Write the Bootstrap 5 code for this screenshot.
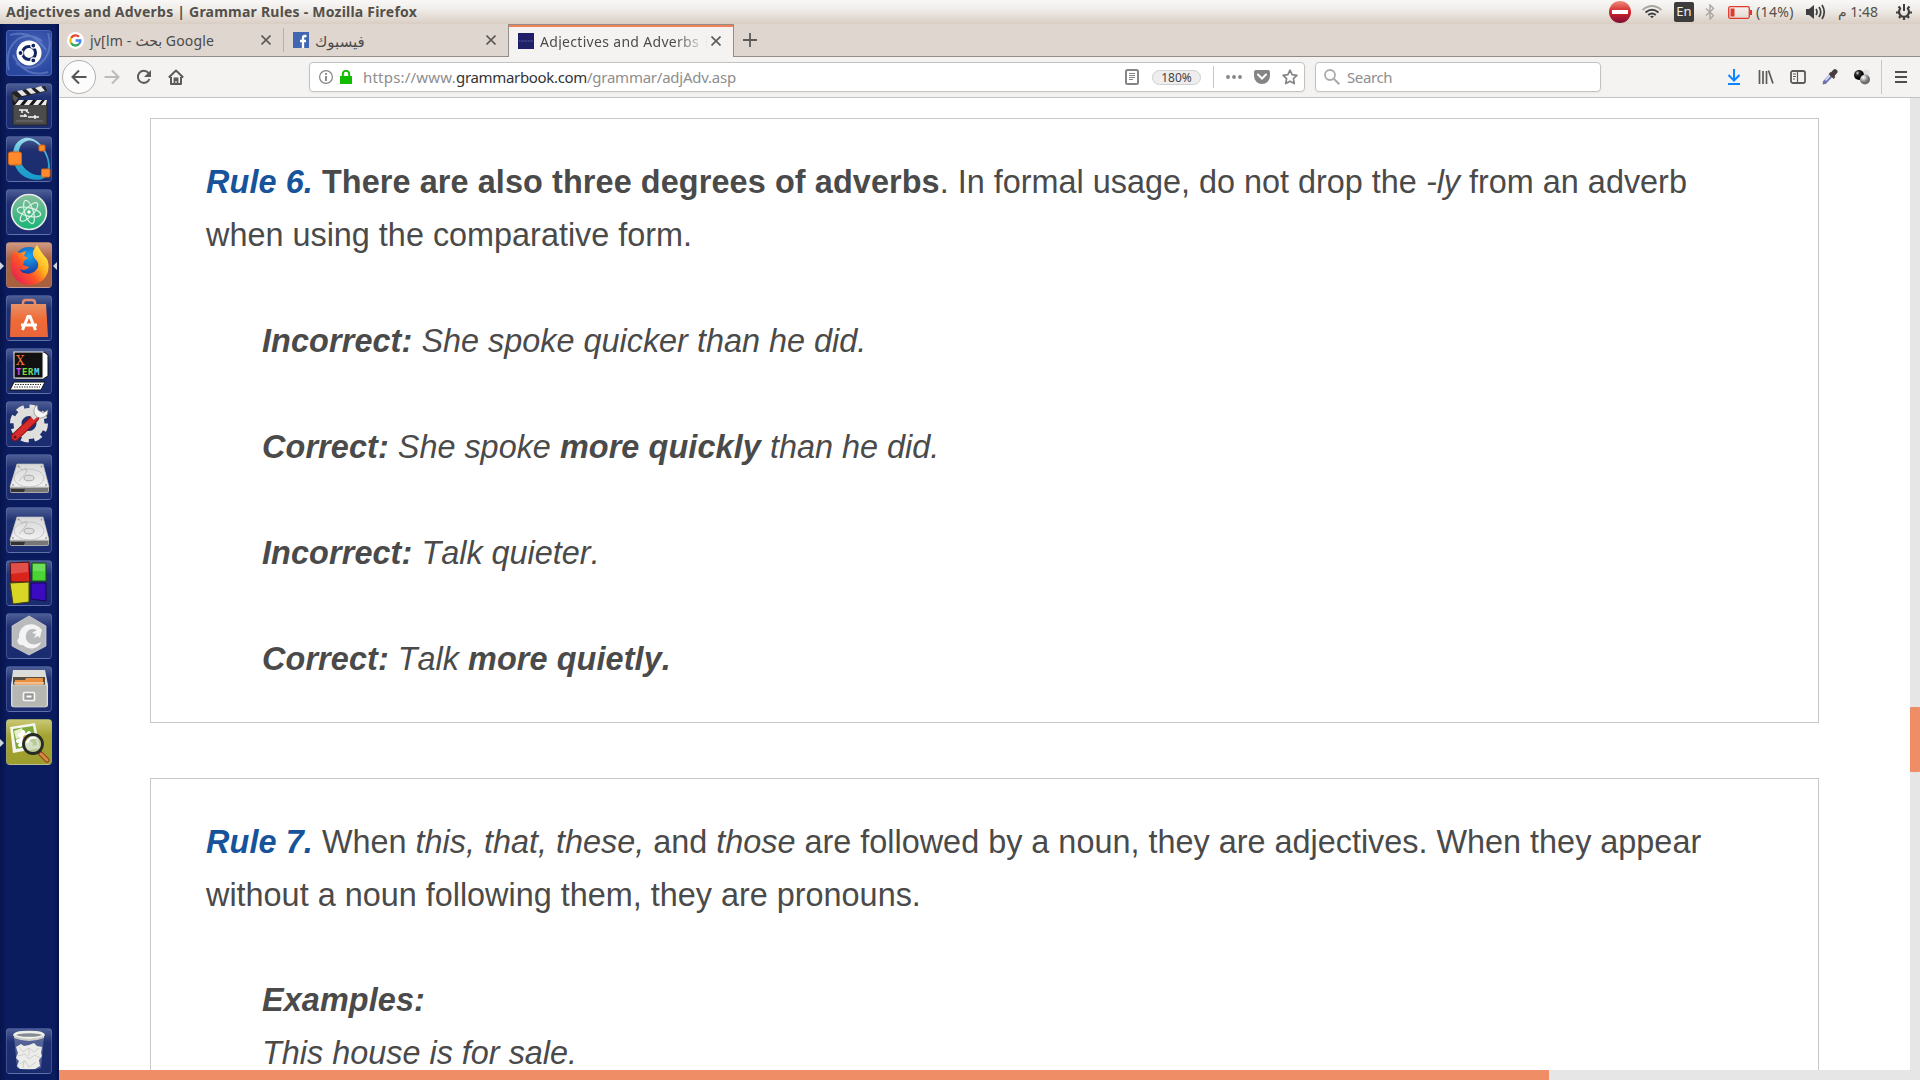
<!DOCTYPE html>
<html lang="en">
<head>
<meta charset="utf-8">
<title>Adjectives and Adverbs | Grammar Rules</title>
<link rel="stylesheet" href="https://cdn.jsdelivr.net/npm/bootstrap@5.3.0/dist/css/bootstrap.min.css">
<style>
body{width:1920px;height:1080px;overflow:hidden;background:#fff;font-family:"Noto Sans","DejaVu Sans",sans-serif;font-size:14px;line-height:1.2;color:#4c4c4c}
svg{display:block;flex:none}
.topbar{height:24px;background:linear-gradient(#f9f8f7,#f1eeeb 35%,#d9cec4);padding-left:6px;color:#54504a}
.win-title{font-weight:700;font-size:14px;white-space:nowrap;letter-spacing:.22px}
.tray{width:311px}
.tray>*{flex:none;white-space:nowrap}
.t-bat{letter-spacing:.35px;width:39px;margin-left:4px}
.t-clock{letter-spacing:.35px;width:43px;margin-left:12px}
.t-goog{letter-spacing:.2px;padding-top:2px}
.t-face{font-size:15px;padding-top:1px}
.t-adj{letter-spacing:.31px}
.t-u1{letter-spacing:.21px}
.t-u2{letter-spacing:-.33px;color:#333}
.t-u3{letter-spacing:-.24px}
.t-s{letter-spacing:-.4px}
.lang{width:20px;height:20px;background:#3c3c3c;color:#f2efec;border-radius:2px;font-size:13px}
.launcher{width:59px;background:linear-gradient(90deg,#06144d,#0b1c5e 12%,#0b1c5e 92%,#03104a);padding:6px 0 6px 6px}
.tile{width:46px;height:46px;border-radius:4px;border:1px solid rgba(150,170,225,.28);background:linear-gradient(rgba(170,185,225,.42),rgba(110,130,190,.2) 30%,rgba(90,110,180,.2));margin-bottom:7px}
.tile svg{margin:-1px}
.tile-dash{background:radial-gradient(circle at 60% 40%,#4a68bd,#2a479f 70%)}
.tile-fox{background:linear-gradient(#cf9a83,#ab6340 35%,#a75f3d)}
.tile-view{background:linear-gradient(#c9c873,#a5a432 35%,#9c9d2e)}
.tile-open::before,.tile-focus::after{content:"";position:absolute;top:19px;border:4px solid transparent}
.tile-open::before{left:-7px;border-left-color:#cfd3dc;border-right:0}
.tile-focus::after{right:-6px;border-right-color:#cfd3dc;border-left:0}
.tab-strip{height:33px;background:#dfd6d0;border-bottom:1px solid #948c86}
.page-tab{height:32px;color:#4a4a4a;white-space:nowrap}
.page-tab-on{height:33px;width:226px;background:#f4f3f1;border:1px solid #948c86;border-bottom:0;box-shadow:inset 0 2px #ef8058;padding-left:9px}
.fade-end{-webkit-mask-image:linear-gradient(90deg,#000 135px,transparent 168px);mask-image:linear-gradient(90deg,#000 135px,transparent 168px);width:168px;margin-left:6px;padding-top:2px}
.tab-x{margin-left:auto;margin-right:12px}
.tools{height:41px;background:#f4f3f1;border-bottom:1px solid #c3c2c0;color:#8e8e8e}
.tool{width:32px;height:32px}
.tool-back{width:34px;height:34px;border:1px solid #b3b0ad;border-radius:50%;background:#fcfcfc}
.field{height:30px;background:#fff;border:1px solid #c4c2c0;border-radius:4px;box-shadow:0 1px 3px rgba(0,0,0,.05);font-size:15px}
.zoom-pill{width:49px;height:15px;border:1px solid #cfcfcf;border-radius:8px;background:#eee;color:#444;font-size:12px;line-height:13px}
.vline{width:1px;background:#c9c8c6}
.reading{padding:20px 91px 0;height:972px;overflow:hidden}
.rule{border:1px solid #c8c8c8;padding:36.5px 54px 36.5px 55px;margin-bottom:55px;font:32.4px/53px "Liberation Sans",Arial,sans-serif;font-kerning:none;color:#4a4a4a;white-space:nowrap}
.rule p{margin:0}
.rule b{letter-spacing:.1px}
.rule .examples{padding:53px 0 0 56px}
.rule .examples p+p.spaced{margin-top:53px}
.rule+.rule{min-height:400px}
.rule+.rule .examples{padding-top:52px}
.rule-no{color:#17539b;font-weight:700;font-style:italic;letter-spacing:.1px}
.vscroll{width:10px;background:#e6e6e6}
.vthumb{height:65px;background:#ef8e66;margin-top:609px;border-radius:1px}
.hscroll{height:10px;background:#e6e6e6}
.hthumb{width:1490px;background:#ef8e66}
</style>
</head>
<body class="d-flex flex-column">
<header class="topbar d-flex align-items-center">
  <span class="win-title">Adjectives and Adverbs | Grammar Rules - Mozilla Firefox</span>
  <div class="tray d-flex align-items-center ms-auto">
    <svg width="22" height="22" viewBox="0 0 22 22"><defs><linearGradient id="rd" x2="0" y2="1"><stop stop-color="#ee8b78"/><stop offset=".5" stop-color="#d2222a"/><stop offset="1" stop-color="#7c1036"/></linearGradient></defs><circle cx="11" cy="11" r="11" fill="url(#rd)"/><rect x="3" y="9" width="16" height="4" fill="#fff"/></svg>
    <svg width="20" height="14" viewBox="0 0 20 14" fill="none" style="margin-left:11px"><path d="M.5 5Q10-3 19.500 5" stroke="#aaa59f" stroke-width="1.800"/><path d="M3.500 7.500Q10 2 16.500 7.500M6.200 10Q10 7 13.800 10" stroke="#3f3f3f" stroke-width="1.900"/><path d="m8 11.300 2 2 2-2q-2-1.300-4 0" fill="#3f3f3f"/></svg>
    <span class="lang d-flex align-items-center justify-content-center" style="margin-left:12px">En</span>
    <svg width="10" height="16" viewBox="0 0 10 16" fill="none" stroke="#aaa6a2" stroke-width="1.400" style="margin-left:11px"><path d="m1 4.500 7.500 7L5 15V1l3.500 3.500L1 11.500"/></svg>
    <svg width="24" height="13" viewBox="0 0 24 13" style="margin-left:13px"><rect x=".7" y=".7" width="20.600" height="11.600" rx="1.500" fill="none" stroke="#df382c" stroke-width="1.300"/><path d="M2.500 2.500h4v8h-4zM22 4h2v5h-2z" fill="#df382c"/></svg>
    <span class="t-bat">(14%)</span>
    <svg width="20" height="16" viewBox="0 0 20 16" style="margin-left:11px"><path d="M0 5h3l5-4v14l-5-4H0z" fill="#3f3f3f"/><path d="M10 5q2 3 0 6M13 3q3.500 5 0 10M16 1q4.500 7 0 14" fill="none" stroke="#3f3f3f" stroke-width="1.700"/></svg>
    <span class="t-clock"><bdi>م</bdi> 1:48</span>
    <svg width="16" height="16" viewBox="-8 -8 16 16" style="margin-left:15px"><g fill="none" stroke="#3f3f3f"><path d="M-3.200-4A5 5 0 1 0 3.200-4" stroke-width="2.200"/><path d="M0-8v7" stroke-width="2"/><path d="M-5.500-5.500l1.700 1.700M5.500-5.500 3.800-3.800M-8 .5h3M8 .5H5M-5 6l1.500-2M5 6 3.500 4M0 8V5.500" stroke-width="2.200"/></g></svg>
  </div>
</header>
<div class="d-flex flex-grow-1">
  <nav class="launcher d-flex flex-column">
    <div class="tile tile-dash"><svg width="46" height="46" viewBox="0 0 46 46"><path d="M3 40Q-2 20 12 9 24 2 36 11M42 3q6 19-8 31-12 8-24-1M4 5q22-6 36 15M42 42Q20 49 7 25" fill="none" stroke="#9fb3e6" stroke-opacity=".35" stroke-width="2"/><circle cx="23" cy="23" r="12.500" fill="#fff"/><circle cx="23" cy="23" r="6.500" fill="none" stroke="#112560" stroke-width="3"/><g stroke="#fff" stroke-width="1.200" fill="#112560"><circle cx="14.500" cy="23" r="2.500"/><circle cx="27.300" cy="15.600" r="2.500"/><circle cx="27.300" cy="30.400" r="2.500"/></g></svg></div>
    <div class="tile"><svg width="46" height="46" viewBox="0 0 46 46"><rect x="7" y="20" width="34" height="22" rx="1" fill="#4b4b4b" stroke="#292929"/><path d="M6 17h35v5H7z" fill="#181818"/><path d="m13 17-4 5h5l4-5zm9 0-4 5h5l4-5zm9 0-4 5h5l4-5zm8 0-4 5h5l1-5z" fill="#eee"/><path d="M6 9 39 3l2 5-33 8z" fill="#222"/><path d="m11 8 5 5 5-1-5-5zm9-2 5 5 5-1-5-5zm9-1 5 4 5-1-4-5z" fill="#e6e6e6"/><path d="m6 10 7 5-4 5q-4-4-3-10" fill="#555" stroke="#222"/><path d="M13 27h9m-6 0v3m4-2 3 2m-9 3h7m-2-2v3m3 0h11m-4-2v4" stroke="#f5f5f5" stroke-width="1.500"/><path d="M10 38h27" stroke="#777"/></svg></div>
    <div class="tile"><svg width="46" height="46" viewBox="0 0 46 46"><defs><linearGradient id="oc" x2="0" y2="1"><stop stop-color="#9fe1ec"/><stop offset=".5" stop-color="#36a5cb"/><stop offset="1" stop-color="#159bcd"/></linearGradient></defs><path fill-rule="evenodd" d="M19 2C32 0 44 17 44 31c0 16-19 15-28 8C5 31 2 6 19 2m2 3C9 8 11 28 22 35c9 7 20 6 20-6C42 17 30 2 21 5" fill="url(#oc)"/><g fill="#ff8a2b" stroke="#d36414"><rect x="2.500" y="16" width="13" height="13" rx="2"/><rect x="33" y="9" width="6" height="6" rx="1"/><rect x="35.500" y="33" width="8.500" height="8" rx="1"/></g></svg></div>
    <div class="tile"><svg width="46" height="46" viewBox="0 0 46 46"><defs><linearGradient id="at" x2="0" y2="1"><stop stop-color="#88bd9d"/><stop offset="1" stop-color="#18b477"/></linearGradient></defs><circle cx="23" cy="23" r="17.500" fill="url(#at)" stroke="#e6ebe7" stroke-width="1.600"/><g fill="none" stroke="#e0f3e7" stroke-width="1.200"><ellipse cx="23" cy="23" rx="12" ry="4.300" transform="rotate(13 23 23)"/><ellipse cx="23" cy="23" rx="12" ry="4.300" transform="rotate(73 23 23)"/><ellipse cx="23" cy="23" rx="12" ry="4.300" transform="rotate(133 23 23)"/></g><circle cx="23" cy="23" r="1.700" fill="#fff"/></svg></div>
    <div class="tile tile-fox tile-open tile-focus position-relative"><svg width="46" height="46" viewBox="0 0 46 46"><defs><radialGradient id="fg" cx=".5" cy=".3" r=".6"><stop stop-color="#18a7ef"/><stop offset="1" stop-color="#173ca5"/></radialGradient><linearGradient id="ff" x1=".9" y1=".1" x2=".1" y2=".8"><stop stop-color="#fff150"/><stop offset=".35" stop-color="#ffb421"/><stop offset=".65" stop-color="#ff5428"/><stop offset="1" stop-color="#e8274d"/></linearGradient></defs><circle cx="23" cy="20" r="15" fill="url(#fg)"/><path d="M8 9q-2 3-2 6c-5 15 4 28 17 28 16 0 23-14 18-26Q36 12 31 3c-6 7-5 11 0 16q3 5-1 9c-5 6-15 4-16-1 3 2 7 1 9-2l-6-2 1-4 4-3-4-2 2-5-6 2Q10 10 8 9" fill="url(#ff)"/></svg></div>
    <div class="tile"><svg width="46" height="46" viewBox="0 0 46 46"><defs><linearGradient id="bg" x2="0" y2="1"><stop stop-color="#e99166"/><stop offset=".5" stop-color="#ef6a35"/><stop offset="1" stop-color="#e7653b"/></linearGradient></defs><path d="M17 13V8q0-3 3-3h6q3 0 3 3v5" fill="none" stroke="#e88b6c" stroke-width="2.500"/><path d="M5 9h35l2 33H4z" fill="url(#bg)"/><path d="m16.500 35 5.500-13.500h2L29.500 35M15 30h16" stroke="#fff" stroke-width="3" fill="none"/></svg></div>
    <div class="tile"><svg width="46" height="46" viewBox="0 0 46 46"><path d="m38 4 4 3v21l-5 3H10l-3-2z" fill="#fff" stroke="#111"/><rect x="8" y="4" width="29" height="26" fill="#111" stroke="#eee"/><text x="10" y="17" font-family="DejaVu Serif" font-size="12" fill="#ff6a35">X</text><text y="26.500" font-family="DejaVu Sans Mono" font-weight="700" font-size="9"><tspan x="10" fill="#ee4ae4">T</tspan><tspan x="16" fill="#6fe043">E</tspan><tspan x="22" fill="#6fe043">R</tspan><tspan x="28" fill="#58d2ed">M</tspan></text><path d="M8 34h31l-4 8H4z" fill="#fff" stroke="#111"/><path d="M9 36.500h26M8 39h26" stroke="#333" stroke-dasharray="1.500 1"/></svg></div>
    <div class="tile"><svg width="46" height="46" viewBox="0 0 46 46"><circle cx="23" cy="22.500" r="16.500" fill="none" stroke="#e2e2e0" stroke-width="5" stroke-dasharray="7.500 5.460"/><circle cx="23" cy="22.500" r="11.500" fill="none" stroke="#dededc" stroke-width="8"/><path d="M9 36 29 17" stroke="#8f1515" stroke-width="8" stroke-linecap="round"/><path d="M9 36 29 17" stroke="#d72c2b" stroke-width="6" stroke-linecap="round"/><path d="m26 17 6-5" stroke="#d9d9d7" stroke-width="5"/><path d="M31 4q-5 4-2 10 5 6 12 0l1-5-5 3-5-3z" fill="#f5f5f4" stroke="#888" stroke-width=".7"/><circle cx="9" cy="36" r="1.500" fill="#65151b"/></svg></div>
    <div class="tile"><svg width="46" height="46" viewBox="0 0 46 46"><use href="#hdd"/><defs><linearGradient id="hd" x2="0" y2="1"><stop stop-color="#d8d8d8"/><stop offset="1" stop-color="#f1f1f1"/></linearGradient><g id="hdd"><path d="M11 10h26l6 23v4q0 2-2 2H6q-2 0-2-2v-4z" fill="#aaa"/><path d="M11 10h26l6 23H4z" fill="url(#hd)" stroke="#bbb" stroke-width=".7"/><path d="M4 34h38v3q0 1-2 1H6q-2 0-2-2z" fill="#777"/><path d="M5 35h14l-1 3H5z" fill="#333"/><ellipse cx="23" cy="24" rx="15" ry="9" fill="none" stroke="#c6c6c6"/><ellipse cx="23" cy="24" rx="5" ry="2.800" fill="#ddd" stroke="#aaa"/><path d="m13 12 3 4q7-4 4 3l-7 8" fill="none" stroke="#bbb"/><g fill="#999"><circle cx="12.500" cy="12.500" r=".9"/><circle cx="35.500" cy="12.500" r=".9"/><circle cx="7" cy="31" r=".9"/><circle cx="40" cy="31" r=".9"/></g></g></defs></svg></div>
    <div class="tile"><svg width="46" height="46" viewBox="0 0 46 46"><use href="#hdd"/></svg></div>
    <div class="tile"><svg width="46" height="46" viewBox="0 0 46 46"><path d="m4 3 19-1 1 20H5z" fill="#d9241c" stroke="#501010"/><path d="M26 3h14v18H26z" fill="#4bd534" stroke="#184d17"/><path d="m4 23 19-1v20L7 44z" fill="#d9d726" stroke="#43420d"/><path d="M25 23h15v18l-15-2z" fill="#3b0bbf" stroke="#180359"/><path d="M5 3h17v9L5 14zm22 1h12v7H27z" fill="#fff" opacity=".2"/></svg></div>
    <div class="tile"><svg width="46" height="46" viewBox="0 0 46 46"><path d="m23 3 17 10v20L23 42 6 33V13z" fill="#b8babc" stroke="#d8dadb" stroke-width=".7"/><path d="M36 17C29 7 12 10 13 25c-4 3 0 8 4 7 6 6 16 4 18-3-6 4-13 3-15-3-1-8 4-12 11-9l-5 3 4 1-2 4 4-2 2 2 1-5z" fill="#f4f4f4"/></svg></div>
    <div class="tile"><svg width="46" height="46" viewBox="0 0 46 46"><path d="M7 4h32l3 15v20q0 2-2 2H7q-2 0-2-2V19z" fill="#dcdcd8"/><path d="M7 11h32v9H7z" fill="#554c44"/><path d="M9 14h10l1-2h17v7H9z" fill="#e79043"/><path d="M8 17h30" stroke="#f6cda4" stroke-width="1.500"/><path d="M6 19h35v20q0 2-2 2H8q-2 0-2-2z" fill="#b6b6b2" stroke="#ddd" stroke-width=".7"/><rect x="17.500" y="26.500" width="11" height="8" rx="1" fill="#999" stroke="#f5f5f5" stroke-width="1.700"/><path d="M20.500 30.500h5" stroke="#fff" stroke-width="2"/></svg></div>
    <div class="tile tile-view tile-open position-relative"><svg width="46" height="46" viewBox="0 0 46 46"><path d="m4 8 25-4 5 25-27 5z" fill="#f4f5ed"/><path d="m7 10 20-3 4 19-21 4z" fill="#7cab3c"/><path d="m8 12 8-3 2 8-8 3z" fill="#e8efcb"/><g stroke="#fff" stroke-width="4" stroke-linecap="round"><path d="m17 13 5 14M12 22l15-5M14 16l11 9M23 14l-9 12"/></g><circle cx="20" cy="19" r="3" fill="#f2a816"/><path d="m34 34 7 7" stroke="#874519" stroke-width="5" stroke-linecap="round"/><path d="m35 35 6 6" stroke="#dd8946" stroke-width="3" stroke-linecap="round"/><circle cx="27" cy="25" r="9.500" fill="#c9d6b4" fill-opacity=".75" stroke="#272b26" stroke-width="2.800"/><path d="M21 24q2-6 9-5" stroke="#fff" stroke-width="2" fill="none"/></svg></div>
    <div class="tile mt-auto mb-0"><svg width="46" height="46" viewBox="0 0 46 46"><path d="M8 8h30l-3 32q-12 4-24 0z" fill="#b7c0dc" fill-opacity=".35"/><path d="m10 19 5-3 3 2 5-1 5-2 3 3 5 1-1 6 1 3-3 4 1 6-5 3H14l-3-3 2-5-3-3 2-5z" fill="#ecedeb"/><path d="m13 19 4 5 6-4 5 4 5-4M12 28l7-2 4 5 6-4 5 3M14 36l5-3 4 6 7-5M23 20v8m-5 4-1 8" fill="none" stroke="#cfd0ce"/><ellipse cx="23" cy="7" rx="14.500" ry="3" fill="#858b92" stroke="#eeefe9" stroke-width="2.500"/><path d="M8 8q15 6 30 0v2q-15 6-30 0z" fill="#c9cbc4"/></svg></div>
  </nav>
  <main class="flex-grow-1 d-flex flex-column">
    <div class="tab-strip d-flex">
      <div class="page-tab d-flex align-items-center" style="width:224px;padding-left:8px">
        <svg width="17" height="17" viewBox="0 0 17 17"><circle cx="8.500" cy="8.500" r="8.500" fill="#fff"/><g fill="none" stroke-width="2.300"><path d="M12 4.800A5 5 0 0 0 4.100 6" stroke="#ea4335"/><path d="M4.100 6a5 5 0 0 0 0 5" stroke="#fbbc05"/><path d="M4.100 11a5 5 0 0 0 7.700 1.200" stroke="#34a853"/><path d="M11.800 12.200A5 5 0 0 0 13.400 8.500H8.600" stroke="#4285f4"/></g></svg>
        <span class="t-goog" style="margin-left:6px">jv[lm - <bdi>بحث</bdi> Google</span>
        <svg class="tab-x" width="10" height="10" viewBox="0 0 10 10" stroke="#5c5a58" stroke-width="1.600"><path d="m.5.5 9 9m0-9-9 9"/></svg>
      </div>
      <div class="vline align-self-center" style="height:24px;background:#b7aea8"></div>
      <div class="page-tab d-flex align-items-center" style="width:224px;padding-left:9px">
        <svg width="16" height="16" viewBox="0 0 16 16"><path fill="#4267b2" d="M0 0h16v16H0z"/><path d="M13.500 4h-1.500q-2 0-2 2v10M7 9h6" fill="none" stroke="#fff" stroke-width="2.300"/></svg>
        <span class="t-face" style="margin-left:6px">فيسبوك</span>
        <svg class="tab-x" width="10" height="10" viewBox="0 0 10 10" stroke="#5c5a58" stroke-width="1.600"><path d="m.5.5 9 9m0-9-9 9"/></svg>
      </div>
      <div class="page-tab-on d-flex align-items-center text-nowrap">
        <svg width="16" height="16" viewBox="0 0 16 16"><path fill="#202069" d="M0 0h16v16H0z"/><path d="M1 8h14" stroke="#5d6295" stroke-dasharray="1 .5"/></svg>
        <div class="fade-end"><span class="t-adj">Adjectives and Adverbs</span> |</div>
        <svg width="10" height="10" viewBox="0 0 10 10" stroke="#5c5a58" stroke-width="1.600" style="margin-left:3px"><path d="m.5.5 9 9m0-9-9 9"/></svg>
      </div>
      <svg class="align-self-center" width="14" height="14" viewBox="0 0 14 14" stroke="#5c5a58" stroke-width="1.800" style="margin-left:9px"><path d="M7 0v14M0 7h14"/></svg>
    </div>
    <div class="tools d-flex align-items-center" style="padding-left:3px">
      <div class="tool-back d-flex align-items-center justify-content-center"><svg width="16" height="16" viewBox="0 0 16 16" fill="none" stroke="#565655" stroke-width="2"><path d="M15.500 8H1.500m6.500-6.500L1.500 8 8 14.500"/></svg></div>
      <div class="tool d-flex align-items-center justify-content-center"><svg width="16" height="16" viewBox="0 0 16 16" fill="none" stroke="#bcbbb9" stroke-width="2"><path d="M.5 8h14M8 1.500 14.500 8 8 14.500"/></svg></div>
      <div class="tool d-flex align-items-center justify-content-center"><svg width="16" height="16" viewBox="0 0 16 16"><path d="M12.500 4A6 6 0 1 0 13.500 10" fill="none" stroke="#5b5b5a" stroke-width="2"/><path d="M15 1v7H8z" fill="#5b5b5a"/></svg></div>
      <div class="tool d-flex align-items-center justify-content-center"><svg width="16" height="16" viewBox="0 0 16 16" fill="none" stroke="#5b5b5a" stroke-width="2"><path d="M.8 8.500 8 1.500l7.200 7M3 8v7h10V8" stroke-linejoin="round"/><path d="M6.500 14V9.500h3V14M8 10v2" stroke-width="1.800"/></svg></div>
      <div class="field d-flex align-items-center" style="width:996px;margin-left:117px;padding-left:9px">
        <svg width="14" height="14" viewBox="0 0 14 14"><circle cx="7" cy="7" r="6.400" fill="none" stroke="#858585" stroke-width="1.200"/><path d="M7 6v5M7 3v1.800" stroke="#777" stroke-width="1.700"/></svg>
        <svg width="12" height="14" viewBox="0 0 12 14" style="margin-left:7px"><path d="M0 6h12v8H0z" fill="#12bc00"/><path d="M2.800 7V4a3.200 3.200 0 0 1 6.400 0v3" fill="none" stroke="#12bc00" stroke-width="2"/></svg>
        <span class="text-nowrap" style="margin-left:11px"><span class="t-u1">https://www.</span><span class="t-u2">grammarbook.com</span><span class="t-u3">/grammar/adjAdv.asp</span></span>
        <svg class="ms-auto" width="14" height="16" viewBox="0 0 14 16" fill="none" stroke="#858585"><rect x="1" y="1" width="12" height="14" rx="1.500" stroke-width="2"/><path d="M4 4.500h6M4 6.500h6M4 8.500h6M4 10.500h4"/></svg>
        <span class="zoom-pill text-center" style="margin-left:13px">180%</span>
        <span class="vline" style="height:22px;margin-left:12px"></span>
        <svg width="16" height="4" viewBox="0 0 16 4" fill="#858585" style="margin-left:12px"><circle cx="2" cy="2" r="1.900"/><circle cx="8" cy="2" r="1.900"/><circle cx="14" cy="2" r="1.900"/></svg>
        <svg width="16" height="14" viewBox="0 0 16 14" style="margin-left:12px"><path d="M2 0h12q2 0 2 2v4a8 8 0 0 1-16 0V2Q0 0 2 0" fill="#858585"/><path d="m4 4.500 4 4 4-4" fill="none" stroke="#fff" stroke-width="2" stroke-linecap="round"/></svg>
        <svg width="16" height="16" viewBox="0 0 16 16" style="margin-left:12px;margin-right:6px"><path d="m8 1.200 2.100 4.500 4.800.6-3.500 3.400.9 4.900L8 12.200l-4.300 2.400.9-4.900L1.100 6.300l4.800-.6z" fill="none" stroke="#858585" stroke-width="1.700" stroke-linejoin="round"/></svg>
      </div>
      <div class="field d-flex align-items-center" style="width:286px;margin-left:10px;padding-left:8px">
        <svg width="16" height="16" viewBox="0 0 16 16" fill="none" stroke="#aaa"><circle cx="6" cy="6" r="5" stroke-width="1.800"/><path d="m9.800 9.800 5.500 5.500" stroke-width="2"/></svg>
        <span class="t-s" style="margin-left:7px">Search</span>
      </div>
      <div class="ms-auto d-flex align-items-center">
        <div class="tool d-flex align-items-center justify-content-center"><svg width="14" height="16" viewBox="0 0 14 16" fill="none" stroke="#0a84ff" stroke-width="2"><path d="M7 0v11M1.500 6 7 11.500 12.500 6M1 15h12"/></svg></div>
        <div class="tool d-flex align-items-center justify-content-center"><svg width="16" height="14" viewBox="0 0 16 14" stroke="#5b5b5a" stroke-width="1.700"><path d="M1.500 0v14M5 1v13M8.500 1v13M10.500.5l4.500 13"/></svg></div>
        <div class="tool d-flex align-items-center justify-content-center"><svg width="16" height="14" viewBox="0 0 16 14" fill="none" stroke="#5b5b5a"><rect x="1" y="1" width="14" height="12" rx="1.800" stroke-width="1.800"/><path d="M7.500 1v12M3 4h3M3 6.500h3M3 9h2" stroke-width="1.200"/></svg></div>
        <div class="tool d-flex align-items-center justify-content-center"><svg width="16" height="16" viewBox="0 0 16 16"><path d="m2 14 7.500-8" stroke="#6870b8" stroke-width="4"/><path d="m3.500 11.500 5-5.500" stroke="#e3e8f4" stroke-width="1.500"/><path d="m1 15 2-2" stroke="#778" stroke-width="2"/><path d="m7.500 4 5 5" stroke="#5a4b4a" stroke-width="2.500"/><path d="m10.500 5.500 2.500-2.800" stroke="#493e3e" stroke-width="5" stroke-linecap="round"/></svg></div>
        <div class="tool d-flex align-items-center justify-content-center"><svg width="16" height="16" viewBox="0 0 16 16"><defs><radialGradient id="b1" cx=".35" cy=".3"><stop stop-color="#ddd"/><stop offset=".4" stop-color="#333"/><stop offset="1"/></radialGradient><radialGradient id="b2" cx=".35" cy=".3"><stop stop-color="#fff"/><stop offset="1" stop-color="#6d6d6d"/></radialGradient></defs><circle cx="12" cy="4" r="3.500" fill="#e3e2e0"/><circle cx="5" cy="6" r="5" fill="url(#b1)"/><circle cx="11" cy="10.500" r="5" fill="url(#b2)"/></svg></div>
        <span class="vline" style="height:34px;margin-left:3px"></span>
        <svg width="12" height="12" viewBox="0 0 12 12" stroke="#4e4e4d" stroke-width="1.800" style="margin:0 13px"><path d="M0 1h12M0 6h12M0 11h12"/></svg>
      </div>
    </div>
    <div class="d-flex">
      <div class="reading flex-grow-1">
        <article class="rule">
          <p><span class="rule-no">Rule 6.</span> <b>There are also three degrees of adverbs</b>. In formal usage, do not drop the <i>-ly</i> from an adverb<br>when using the comparative form.</p>
          <div class="examples fst-italic">
            <p><b>Incorrect:</b> She spoke quicker than he did.</p>
            <p class="spaced"><b>Correct:</b> She spoke <b>more quickly</b> than he did.</p>
            <p class="spaced"><b>Incorrect:</b> Talk quieter.</p>
            <p class="spaced"><b>Correct:</b> Talk <b>more quietly.</b></p>
          </div>
        </article>
        <article class="rule">
          <p><span class="rule-no">Rule 7.</span> When <i>this, that, these,</i> and <i>those</i> are followed by a noun, they are adjectives. When they appear<br>without a noun following them, they are pronouns.</p>
          <div class="examples fst-italic">
            <p><b>Examples:</b></p>
            <p>This house is for sale.</p>
          </div>
        </article>
      </div>
      <div class="vscroll"><div class="vthumb"></div></div>
    </div>
    <div class="hscroll d-flex"><div class="hthumb"></div></div>
  </main>
</div>
<script src="https://cdn.jsdelivr.net/npm/bootstrap@5.3.0/dist/js/bootstrap.bundle.min.js"></script>
</body>
</html>
